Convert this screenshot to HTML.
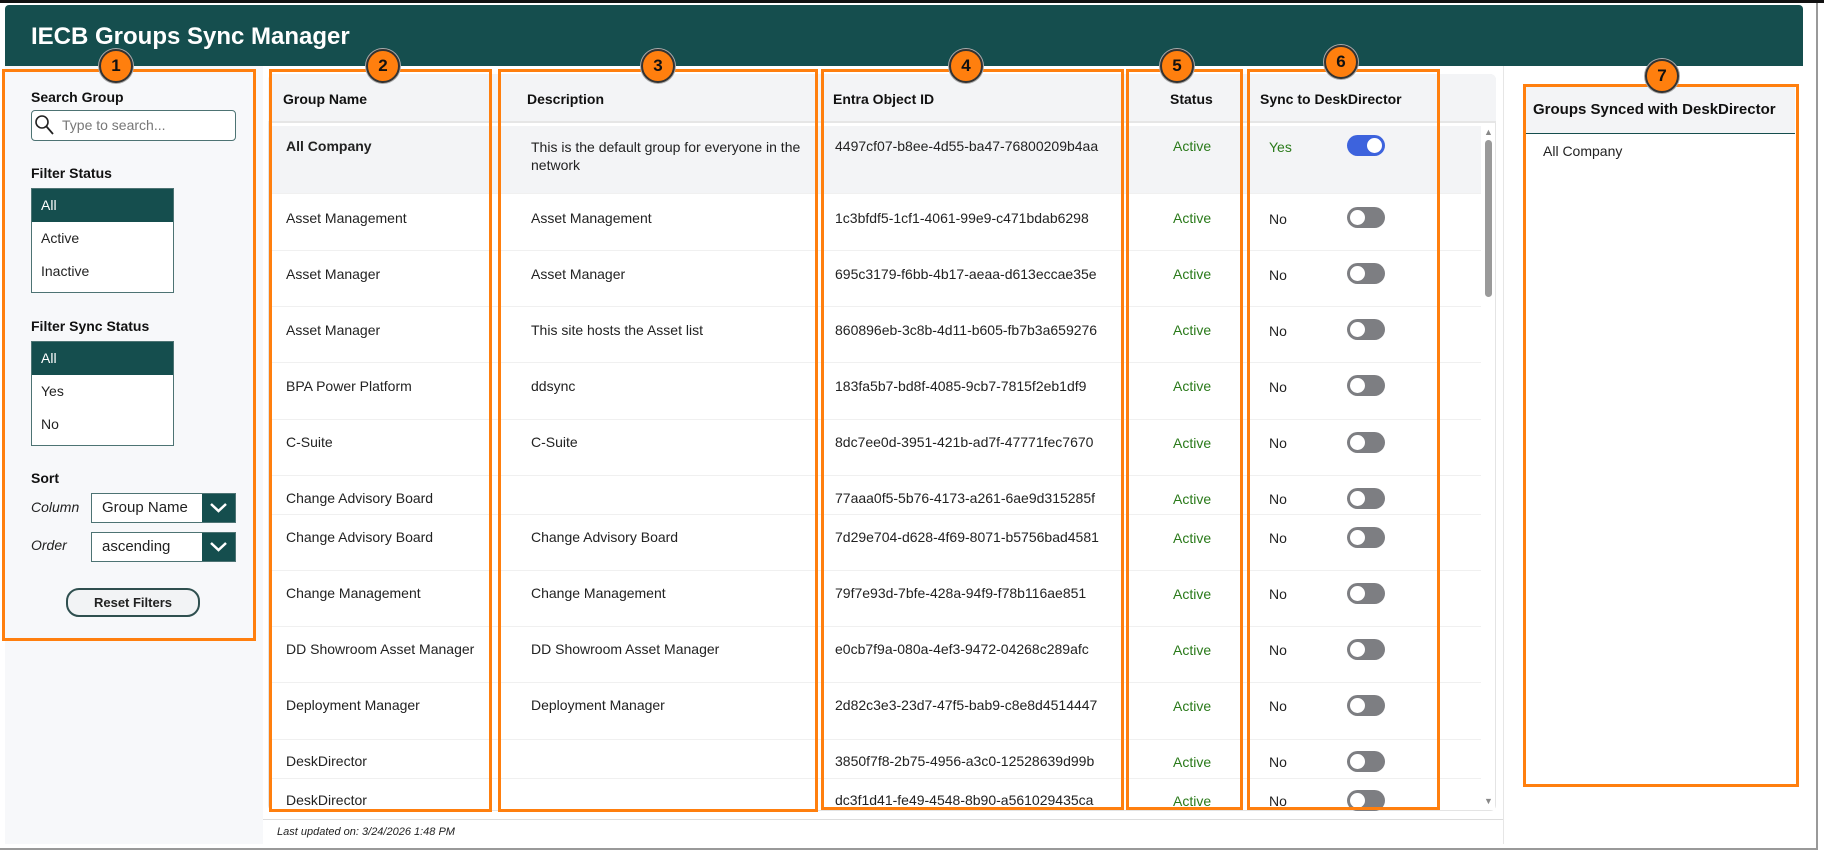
<!DOCTYPE html>
<html><head><meta charset="utf-8"><style>
*{box-sizing:border-box;margin:0;padding:0}
body{width:1824px;height:852px;background:#fff;font-family:"Liberation Sans",sans-serif;position:relative;overflow:hidden;color:#222}
.a{position:absolute}
.hdr{left:5px;top:5px;width:1798px;height:61px;background:#154e4e;border-radius:4px 4px 0 0}
.title{left:31px;top:23px;color:#fff;font-weight:bold;font-size:24px}
.lp{left:5px;top:66px;width:258px;height:778px;background:#f7f8fa}
.lbl{font-weight:bold;font-size:14px;color:#111}
.box{border:3px solid #ff7f0e}
.badge{width:34px;height:34px;border-radius:50%;background:#ff7f0e;border:2px solid #333;box-shadow:0 0 0 1px #aaa;font-weight:bold;font-size:17px;text-align:center;line-height:30px;color:#111}
.lst{background:#fff;border:1px solid #4d7373;font-size:14px}
.lst div{height:33px;line-height:33px;padding-left:9px}
.lst .sel{background:#154e4e;color:#fff}
.dd{background:#fff;border:1px solid #4d7373;height:30px;font-size:15px;line-height:28px;padding-left:10px}
.dd .ch{position:absolute;right:0;top:0;width:33px;height:28px;background:#154e4e}
.tbl{left:268px;top:74px;width:1228px;height:737px;border:1px solid #e4e4e4;border-radius:6px;background:#fff}
.th{top:74px;height:49px;background:#f3f4f6;left:268px;width:1228px;border-bottom:2px solid #e6e6e6;border-radius:6px 6px 0 0}
.ht{top:91px;font-weight:bold;font-size:14px;color:#111}
.row{left:269px;width:1212px;border-bottom:1px solid #f0f0f0}
.c{font-size:14px;color:#222}
.act{color:#2a7a1a;font-size:14px}
.tg{width:38px;height:21px;border-radius:11px;background:#7d7e82}
.tg::after{content:"";position:absolute;left:3px;top:3px;width:15px;height:15px;border-radius:50%;background:#fff}
.tg.on{background:#3d63dd}
.tg.on::after{left:20px}
</style></head><body>
<div class="a" style="left:0;top:0;width:1824px;height:3px;background:#111"></div>
<div class="a" style="left:1816px;top:3px;width:2px;height:846px;background:#999"></div>
<div class="a" style="left:0;top:848px;width:1818px;height:2px;background:#999"></div>
<div class="a hdr"></div>
<div class="a title">IECB Groups Sync Manager</div>
<div class="a lp"></div>
<div class="a" style="left:1503px;top:66px;width:1px;height:778px;background:#e6e6e6"></div>

<div class="a lbl" style="left:31px;top:89px">Search Group</div>
<div class="a" style="left:31px;top:110px;width:205px;height:31px;border:1px solid #4d7373;border-radius:4px;background:#fff"></div>
<svg class="a" style="left:34px;top:113px" width="22" height="24" viewBox="0 0 22 24"><circle cx="8" cy="9" r="6" fill="none" stroke="#222" stroke-width="1.6"/><path d="M12.5 13.5 L19 21" stroke="#222" stroke-width="1.8"/></svg>
<div class="a" style="left:62px;top:117px;font-size:14px;color:#777">Type to search...</div>
<div class="a lbl" style="left:31px;top:165px">Filter Status</div>
<div class="a lst" style="left:31px;top:188px;width:143px;height:105px"><div class="sel">All</div><div>Active</div><div>Inactive</div></div>
<div class="a lbl" style="left:31px;top:318px">Filter Sync Status</div>
<div class="a lst" style="left:31px;top:341px;width:143px;height:105px"><div class="sel">All</div><div>Yes</div><div>No</div></div>
<div class="a lbl" style="left:31px;top:470px">Sort</div>
<div class="a" style="left:31px;top:499px;font-style:italic;font-size:14px">Column</div>
<div class="a dd" style="left:91px;top:493px;width:145px">Group Name<div class="ch"><svg width="33" height="28"><path d="M9 10 L16.5 17 L24 10" fill="none" stroke="#fff" stroke-width="2.5"/></svg></div></div>
<div class="a" style="left:31px;top:537px;font-style:italic;font-size:14px">Order</div>
<div class="a dd" style="left:91px;top:532px;width:145px">ascending<div class="ch"><svg width="33" height="28"><path d="M9 10 L16.5 17 L24 10" fill="none" stroke="#fff" stroke-width="2.5"/></svg></div></div>
<div class="a" style="left:66px;top:588px;width:134px;height:29px;border:2px solid #2f4f4f;border-radius:13px;background:#f2f3f5;font-weight:bold;font-size:13px;text-align:center;line-height:25px">Reset Filters</div>

<div class="a tbl"></div>
<div class="a th"></div>
<div class="a ht" style="left:283px">Group Name</div>
<div class="a ht" style="left:527px">Description</div>
<div class="a ht" style="left:833px">Entra Object ID</div>
<div class="a ht" style="left:1170px">Status</div>
<div class="a ht" style="left:1260px">Sync to DeskDirector</div>
<div class="a" style="left:1481px;top:126px;width:14px;height:684px;background:#fff"></div>
<div class="a" style="left:1484px;top:127px;font-size:9px;color:#888">▲</div>
<div class="a" style="left:1485px;top:140px;width:7px;height:157px;border-radius:4px;background:#9a9a9a"></div>
<div class="a" style="left:1484px;top:796px;font-size:9px;color:#888">▼</div>

<div class="a row" style="top:126px;height:68px;background:#f3f4f6"></div>
<div class="a c" style="left:286px;top:138px;font-weight:bold">All Company</div>
<div class="a c" style="left:531px;top:138px;line-height:18px">This is the default group for everyone in the<br>network</div>
<div class="a c" style="left:835px;top:138px">4497cf07-b8ee-4d55-ba47-76800209b4aa</div>
<div class="a act" style="left:1173px;top:138px">Active</div>
<div class="a c" style="left:1269px;top:139px;color:#2a7a1a">Yes</div>
<div class="a tg on" style="left:1347px;top:135px"></div>

<div class="a row" style="top:194px;height:57px"></div>
<div class="a row" style="top:251px;height:56px"></div>
<div class="a row" style="top:307px;height:56px"></div>
<div class="a row" style="top:363px;height:57px"></div>
<div class="a row" style="top:420px;height:56px"></div>
<div class="a row" style="top:476px;height:39px"></div>
<div class="a row" style="top:515px;height:56px"></div>
<div class="a row" style="top:571px;height:56px"></div>
<div class="a row" style="top:627px;height:56px"></div>
<div class="a row" style="top:683px;height:57px"></div>
<div class="a row" style="top:740px;height:39px"></div>

<div class="a c" style="left:286px;top:210px">Asset Management</div><div class="a c" style="left:531px;top:210px">Asset Management</div><div class="a c" style="left:835px;top:210px">1c3bfdf5-1cf1-4061-99e9-c471bdab6298</div><div class="a act" style="left:1173px;top:210px">Active</div><div class="a c" style="left:1269px;top:211px">No</div><div class="a tg" style="left:1347px;top:207px"></div>
<div class="a c" style="left:286px;top:266px">Asset Manager</div><div class="a c" style="left:531px;top:266px">Asset Manager</div><div class="a c" style="left:835px;top:266px">695c3179-f6bb-4b17-aeaa-d613eccae35e</div><div class="a act" style="left:1173px;top:266px">Active</div><div class="a c" style="left:1269px;top:267px">No</div><div class="a tg" style="left:1347px;top:263px"></div>
<div class="a c" style="left:286px;top:322px">Asset Manager</div><div class="a c" style="left:531px;top:322px">This site hosts the Asset list</div><div class="a c" style="left:835px;top:322px">860896eb-3c8b-4d11-b605-fb7b3a659276</div><div class="a act" style="left:1173px;top:322px">Active</div><div class="a c" style="left:1269px;top:323px">No</div><div class="a tg" style="left:1347px;top:319px"></div>
<div class="a c" style="left:286px;top:378px">BPA Power Platform</div><div class="a c" style="left:531px;top:378px">ddsync</div><div class="a c" style="left:835px;top:378px">183fa5b7-bd8f-4085-9cb7-7815f2eb1df9</div><div class="a act" style="left:1173px;top:378px">Active</div><div class="a c" style="left:1269px;top:379px">No</div><div class="a tg" style="left:1347px;top:375px"></div>
<div class="a c" style="left:286px;top:434px">C-Suite</div><div class="a c" style="left:531px;top:434px">C-Suite</div><div class="a c" style="left:835px;top:434px">8dc7ee0d-3951-421b-ad7f-47771fec7670</div><div class="a act" style="left:1173px;top:435px">Active</div><div class="a c" style="left:1269px;top:435px">No</div><div class="a tg" style="left:1347px;top:432px"></div>
<div class="a c" style="left:286px;top:490px">Change Advisory Board</div><div class="a c" style="left:835px;top:490px">77aaa0f5-5b76-4173-a261-6ae9d315285f</div><div class="a act" style="left:1173px;top:491px">Active</div><div class="a c" style="left:1269px;top:491px">No</div><div class="a tg" style="left:1347px;top:488px"></div>
<div class="a c" style="left:286px;top:529px">Change Advisory Board</div><div class="a c" style="left:531px;top:529px">Change Advisory Board</div><div class="a c" style="left:835px;top:529px">7d29e704-d628-4f69-8071-b5756bad4581</div><div class="a act" style="left:1173px;top:530px">Active</div><div class="a c" style="left:1269px;top:530px">No</div><div class="a tg" style="left:1347px;top:527px"></div>
<div class="a c" style="left:286px;top:585px">Change Management</div><div class="a c" style="left:531px;top:585px">Change Management</div><div class="a c" style="left:835px;top:585px">79f7e93d-7bfe-428a-94f9-f78b116ae851</div><div class="a act" style="left:1173px;top:586px">Active</div><div class="a c" style="left:1269px;top:586px">No</div><div class="a tg" style="left:1347px;top:583px"></div>
<div class="a c" style="left:286px;top:641px">DD Showroom Asset Manager</div><div class="a c" style="left:531px;top:641px">DD Showroom Asset Manager</div><div class="a c" style="left:835px;top:641px">e0cb7f9a-080a-4ef3-9472-04268c289afc</div><div class="a act" style="left:1173px;top:642px">Active</div><div class="a c" style="left:1269px;top:642px">No</div><div class="a tg" style="left:1347px;top:639px"></div>
<div class="a c" style="left:286px;top:697px">Deployment Manager</div><div class="a c" style="left:531px;top:697px">Deployment Manager</div><div class="a c" style="left:835px;top:697px">2d82c3e3-23d7-47f5-bab9-c8e8d4514447</div><div class="a act" style="left:1173px;top:698px">Active</div><div class="a c" style="left:1269px;top:698px">No</div><div class="a tg" style="left:1347px;top:695px"></div>
<div class="a c" style="left:286px;top:753px">DeskDirector</div><div class="a c" style="left:835px;top:753px">3850f7f8-2b75-4956-a3c0-12528639d99b</div><div class="a act" style="left:1173px;top:754px">Active</div><div class="a c" style="left:1269px;top:754px">No</div><div class="a tg" style="left:1347px;top:751px"></div>
<div class="a c" style="left:286px;top:792px">DeskDirector</div><div class="a c" style="left:835px;top:792px">dc3f1d41-fe49-4548-8b90-a561029435ca</div><div class="a act" style="left:1173px;top:793px">Active</div><div class="a c" style="left:1269px;top:793px">No</div>
<div class="a" style="left:1347px;top:790px;width:38px;height:21px;overflow:hidden"><div class="a tg" style="left:0;top:0"></div></div>
<div class="a" style="left:268px;top:811px;width:1228px;height:37px;background:#fff"></div>
<div class="a" style="left:263px;top:819px;width:1240px;height:1px;background:#ddd"></div>
<div class="a" style="left:277px;top:826px;font-size:11px;font-style:italic;color:#222">Last updated on: 3/24/2026 1:48 PM</div>

<div class="a" style="left:1524px;top:85px;width:273px;height:700px;background:#fff"></div>
<div class="a" style="left:1526px;top:87px;width:269px;height:47px;background:#f3f4f6;border-bottom:1px solid #154e4e"></div>
<div class="a lbl" style="left:1533px;top:101px;font-size:15px">Groups Synced with DeskDirector</div>
<div class="a c" style="left:1543px;top:143px">All Company</div>

<div class="a box" style="left:2px;top:69px;width:254px;height:572px"></div>
<div class="a box" style="left:269px;top:69px;width:223px;height:743px"></div>
<div class="a box" style="left:498px;top:69px;width:320px;height:743px"></div>
<div class="a box" style="left:821px;top:69px;width:303px;height:741px"></div>
<div class="a box" style="left:1126px;top:69px;width:117px;height:741px"></div>
<div class="a box" style="left:1247px;top:69px;width:193px;height:741px"></div>
<div class="a box" style="left:1523px;top:84px;width:276px;height:703px"></div>

<div class="a badge" style="left:99px;top:49px">1</div>
<div class="a badge" style="left:366px;top:49px">2</div>
<div class="a badge" style="left:641px;top:49px">3</div>
<div class="a badge" style="left:949px;top:49px">4</div>
<div class="a badge" style="left:1160px;top:49px">5</div>
<div class="a badge" style="left:1324px;top:45px">6</div>
<div class="a badge" style="left:1645px;top:59px">7</div>
</body></html>
